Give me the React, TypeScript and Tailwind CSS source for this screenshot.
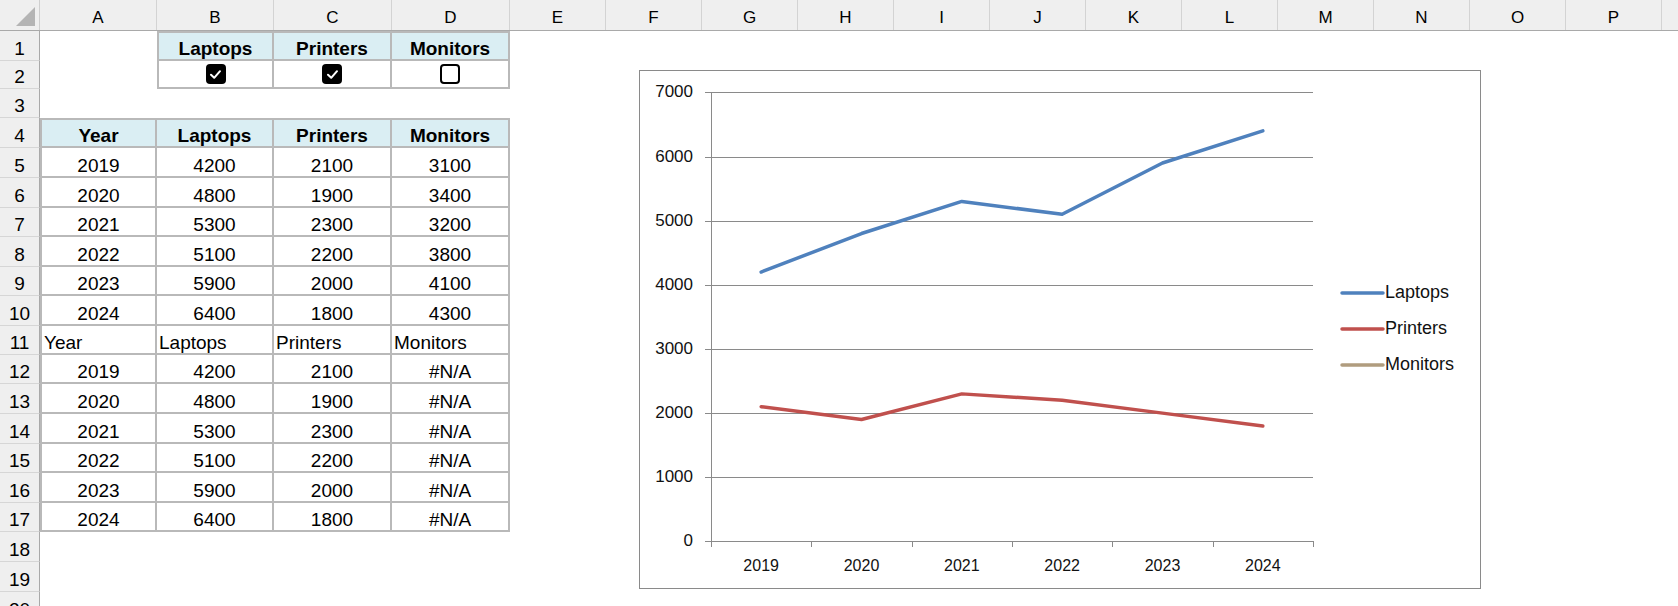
import { Fragment } from "react";

const years = ["2019", "2020", "2021", "2022", "2023", "2024"];
const products = ["Laptops", "Printers", "Monitors"] as const;
type Product = (typeof products)[number];

const sales: Record<Product, number[]> = {
  Laptops: [4200, 4800, 5300, 5100, 5900, 6400],
  Printers: [2100, 1900, 2300, 2200, 2000, 1800],
  Monitors: [3100, 3400, 3200, 3800, 4100, 4300],
};
const shown: Record<Product, boolean> = { Laptops: true, Printers: true, Monitors: false };
const colors: Record<Product, string> = { Laptops: "#4f81bd", Printers: "#c0504d", Monitors: "#b09c7e" };

const letters = "ABCDEFGHIJKLMNOP".split("");
const colW = ["w-[117px]", "w-[117px]", "w-[118px]", "w-[118px]"];
const rowH = [
  "h-[30px]", "h-[28px]", "h-[29px]", "h-[30px]", "h-[30px]", "h-[30px]", "h-[29px]",
  "h-[30px]", "h-[29px]", "h-[30px]", "h-[29px]", "h-[29px]", "h-[30px]", "h-[30px]",
  "h-[29px]", "h-[30px]", "h-[29px]", "h-[30px]", "h-[30px]", "h-[30px]",
];

type Cell =
  | { t: "head"; v: string }
  | { t: "val"; v: string }
  | { t: "label"; v: string }
  | { t: "check"; on: boolean };

const rows: (Cell | null)[][] = [
  [null, ...products.map((p): Cell => ({ t: "head", v: p }))],
  [null, ...products.map((p): Cell => ({ t: "check", on: shown[p] }))],
  [],
  [{ t: "head", v: "Year" }, ...products.map((p): Cell => ({ t: "head", v: p }))],
  ...years.map((y, i) => [{ t: "val", v: y } as Cell, ...products.map((p): Cell => ({ t: "val", v: String(sales[p][i]) }))]),
  [{ t: "label", v: "Year" }, ...products.map((p): Cell => ({ t: "label", v: p }))],
  ...years.map((y, i) => [
    { t: "val", v: y } as Cell,
    ...products.map((p): Cell => ({ t: "val", v: shown[p] ? String(sales[p][i]) : "#N/A" })),
  ]),
  [],
  [],
  [],
];

function CheckBox({ on }: { on: boolean }) {
  if (!on) return <div className="w-[20px] h-[20px] rounded-[4px] border-2 border-black bg-white" />;
  return (
    <div className="w-[20px] h-[20px] rounded-[4px] bg-black flex items-center justify-center">
      <svg width="13" height="13" viewBox="0 0 13 13">
        <path d="M2 6.8 L5.2 9.8 L11 3.2" fill="none" stroke="#fff" strokeWidth="2" strokeLinecap="round" strokeLinejoin="round" />
      </svg>
    </div>
  );
}

function SheetCell({ cell, w, top, left }: { cell: Cell | null; w: string; top: boolean; left: boolean }) {
  if (!cell) return <div className={`${w} shrink-0`} />;
  const edges = `border-[#b9b9b9] border-r-2 border-b-2 ${top ? "border-t-2" : ""} ${left ? "border-l-2" : ""}`;
  if (cell.t === "check") {
    return (
      <div className={`${w} shrink-0 ${edges} flex items-center justify-center`}>
        <CheckBox on={cell.on} />
      </div>
    );
  }
  const look =
    cell.t === "head"
      ? "bg-[#daeef3] font-bold justify-center"
      : cell.t === "label"
        ? "justify-start pl-[2px]"
        : "justify-center";
  return (
    <div className={`${w} shrink-0 ${edges} ${look} flex items-end pb-[1px] text-[19px] leading-none`}>
      {cell.v}
    </div>
  );
}

// chart geometry, in pixels inside the chart frame
const X0 = 71;
const STEP = 100.33;
const Y0 = 470.4;
const PER = 0.06414;
const px = (i: number) => X0 + STEP / 2 + i * STEP;
const py = (v: number) => Y0 - v * PER;

function SalesChart() {
  const ticks = [0, 1000, 2000, 3000, 4000, 5000, 6000, 7000];
  return (
    <div className="absolute left-[639px] top-[70px] w-[842px] h-[519px] border border-[#8a8a8a] bg-white">
      <svg width="840" height="517" className="block font-['Liberation_Sans',Arial,sans-serif]">
        {ticks.map((v) => {
          const y = Math.round(py(v)) + 0.5;
          return (
            <Fragment key={v}>
              <line x1={65} x2={673} y1={y} y2={y} stroke="#8a8a8a" strokeWidth="1" />
              <text x={53} y={y} textAnchor="end" dominantBaseline="middle" fontSize="17" fill="#111">
                {v}
              </text>
            </Fragment>
          );
        })}
        <line x1={71.5} x2={71.5} y1={21} y2={471} stroke="#8a8a8a" strokeWidth="1" />
        {Array.from({ length: 7 }, (_, k) => {
          const x = Math.round(X0 + k * STEP) + 0.5;
          return <line key={k} x1={x} x2={x} y1={470} y2={476} stroke="#8a8a8a" strokeWidth="1" />;
        })}
        {years.map((y, i) => (
          <text key={y} x={px(i)} y={500} textAnchor="middle" fontSize="16" fill="#111">
            {y}
          </text>
        ))}
        {products
          .filter((p) => shown[p])
          .map((p) => (
            <polyline
              key={p}
              points={sales[p].map((v, i) => `${px(i)},${py(v)}`).join(" ")}
              fill="none"
              stroke={colors[p]}
              strokeWidth="3.5"
              strokeLinejoin="round"
              strokeLinecap="round"
            />
          ))}
        {products.map((p, i) => {
          const y = 222 + i * 36;
          return (
            <Fragment key={p}>
              <line x1={702} x2={743} y1={y} y2={y} stroke={colors[p]} strokeWidth="3.5" strokeLinecap="round" />
              <text x={745} y={y} dominantBaseline="middle" fontSize="18" fill="#111">
                {p}
              </text>
            </Fragment>
          );
        })}
      </svg>
    </div>
  );
}

export default function App() {
  return (
    <div className="relative w-[1678px] h-[606px] overflow-hidden bg-white text-black font-['Liberation_Sans',Arial,sans-serif]">
      {/* column letters */}
      <div className="flex h-[31px] bg-[#efefef] border-b border-[#a9a9a9]">
        <div className="relative w-[40px] shrink-0 border-r border-[#cfcfcf]">
          <svg width="40" height="30" className="absolute left-0 top-0">
            <polygon points="35,7 35,26 16,26" fill="#b4b4b4" />
          </svg>
        </div>
        {letters.map((l, i) => (
          <div
            key={l}
            className={`${i < 4 ? colW[i] : "w-[96px]"} shrink-0 border-r border-[#d3d3d3] flex items-end justify-center pb-[4px] text-[17px] leading-none`}
          >
            {l}
          </div>
        ))}
        <div className="w-[16px] shrink-0" />
      </div>

      {rows.map((cells, r) => {
        const above = r > 0 ? rows[r - 1] : [];
        return (
          <div key={r} className={`flex ${rowH[r]}`}>
            <div className="w-[40px] shrink-0 bg-[#efefef] border-r border-b border-r-[#a9a9a9] border-b-[#d6d6d6] flex items-end justify-center pb-[2px] text-[19px] leading-none">
              {r + 1}
            </div>
            {colW.map((w, c) => {
              const cell = cells[c] ?? null;
              return (
                <SheetCell
                  key={c}
                  cell={cell}
                  w={w}
                  top={!!cell && !above[c]}
                  left={!!cell && (c === 0 || !cells[c - 1])}
                />
              );
            })}
          </div>
        );
      })}

      <SalesChart />
    </div>
  );
}
